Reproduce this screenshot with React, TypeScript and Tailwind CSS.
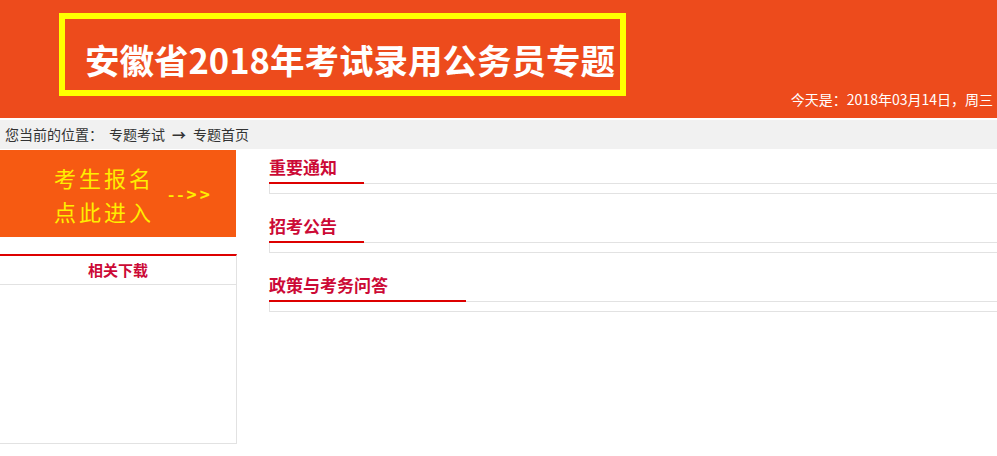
import React from "react";

const font = { fontFamily: '"Noto Sans CJK SC", "Noto Sans", sans-serif' };

function Section({ title, barW, first }: { title: string; barW: string; first?: boolean }) {
  return (
    <div className={first ? "" : "mt-[20px]"}>
      <div className="border-b border-[#e2e2e2] h-[29px]">
        <span
          className={`block ${barW} text-[17px] leading-[24px] font-bold text-[#cc0a36] pb-[3px] border-b-2 border-[#dd0000]`}
        >
          {title}
        </span>
      </div>
      <div className="h-[10px] border-l border-b border-[#e2e2e2]" />
    </div>
  );
}

export default function App() {
  return (
    <div className="w-full h-[456px] overflow-hidden bg-white" style={font}>
      {/* header */}
      <div className="h-[118px] bg-[#ed4b1c] relative">
        <div className="absolute left-[59px] top-[13px] w-[567px] h-[83px] border-[6px] border-[#ffff00] flex items-center pl-[20px]">
          <span className="text-white font-bold text-[34.5px] leading-none pt-[10px] whitespace-nowrap">
            安徽省2018年考试录用公务员专题
          </span>
        </div>
        <div className="absolute right-[4px] top-[90px] text-white text-[14px] leading-[18px] whitespace-nowrap">
          今天是：2018年03月14日，周三
        </div>
      </div>
      <div className="h-[2px] bg-white" />
      {/* breadcrumb */}
      <div className="h-[29px] bg-[#f1f1f1] flex items-center pl-[5px] text-[14px] text-[#333] whitespace-nowrap">
        <span>您当前的位置：</span>
        <span className="ml-[6px]">专题考试</span>
        <span className="mx-[7px] font-bold">→</span>
        <span>专题首页</span>
      </div>
      <div className="h-[1px]" />
      {/* main */}
      <div className="flex">
        <div className="w-[237px] shrink-0">
          <div className="w-[236px] h-[87px] bg-[#f65a12] flex items-center">
            <div className="pl-[54px] text-[#ffee00] text-[22px] leading-[34px] tracking-[3px]">
              <div>考生报名</div>
              <div>点此进入</div>
            </div>
            <div className="ml-[14px] text-[#ffee00] text-[17px] font-bold tracking-[3px]">--&gt;&gt;</div>
          </div>
          <div className="mt-[17px] border-t-2 border-r border-b border-t-[#dd0000] border-r-[#e2e2e2] border-b-[#e2e2e2]">
            <div className="h-[28px] flex items-center justify-center text-[15px] font-bold text-[#cc0a36] border-b border-[#e2e2e2] box-content">
              相关下载
            </div>
            <div className="h-[158px]" />
          </div>
        </div>
        <div className="ml-[32px] w-[740px] shrink-0 pt-[5px]">
          <Section title="重要通知" barW="w-[95px]" first />
          <Section title="招考公告" barW="w-[95px]" />
          <Section title="政策与考务问答" barW="w-[197px]" />
        </div>
      </div>
    </div>
  );
}
